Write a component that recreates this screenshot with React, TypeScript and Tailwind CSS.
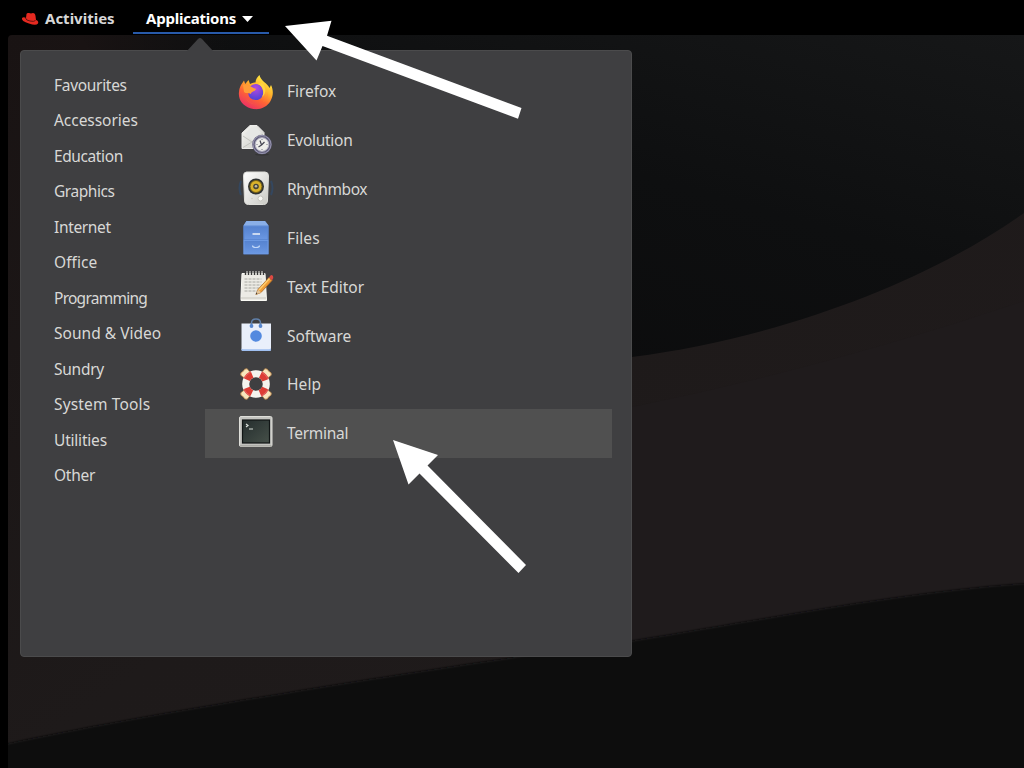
import React from "react";

type Kind = "firefox" | "evolution" | "rhythmbox" | "files" | "editor" | "software" | "help" | "terminal";

const categories = [
  { name: "Favourites", spacing: "tracking-[-0.3px]" },
  { name: "Accessories", spacing: "tracking-[-0.05px]" },
  { name: "Education", spacing: "tracking-[-0.4px]" },
  { name: "Graphics", spacing: "tracking-[-0.45px]" },
  { name: "Internet", spacing: "tracking-[-0.35px]" },
  { name: "Office", spacing: "tracking-[0.05px]" },
  { name: "Programming", spacing: "tracking-[-0.75px]" },
  { name: "Sound & Video", spacing: "tracking-[0.02px]" },
  { name: "Sundry", spacing: "tracking-[-0.25px]" },
  { name: "System Tools", spacing: "tracking-[0.15px]" },
  { name: "Utilities", spacing: "tracking-[-0.2px]" },
  { name: "Other", spacing: "tracking-[-0.25px]" },
];

const apps: { name: string; kind: Kind; spacing: string }[] = [
  { name: "Firefox", kind: "firefox", spacing: "tracking-[-0.05px]" },
  { name: "Evolution", kind: "evolution", spacing: "tracking-[-0.28px]" },
  { name: "Rhythmbox", kind: "rhythmbox", spacing: "tracking-[-0.38px]" },
  { name: "Files", kind: "files", spacing: "tracking-[0.1px]" },
  { name: "Text Editor", kind: "editor", spacing: "tracking-[-0.02px]" },
  { name: "Software", kind: "software", spacing: "tracking-[-0.05px]" },
  { name: "Help", kind: "help", spacing: "tracking-[0.1px]" },
  { name: "Terminal", kind: "terminal", spacing: "tracking-[-0.28px]" },
];

function Glyph({ kind }: { kind: Kind }) {
  switch (kind) {
    case "firefox":
      return (
        <>
          <defs>
            <linearGradient id="ff" x1="0.8" y1="0.05" x2="0.25" y2="1">
              <stop offset="0" stopColor="#fff044" />
              <stop offset="0.35" stopColor="#ffb32c" />
              <stop offset="0.62" stopColor="#ff6534" />
              <stop offset="1" stopColor="#e92c69" />
            </linearGradient>
            <radialGradient id="ffp" cx="0.5" cy="0.25" r="0.75">
              <stop offset="0" stopColor="#b44ae0" />
              <stop offset="1" stopColor="#4f42d5" />
            </radialGradient>
          </defs>
          <path d="M3 11 6 6.500 7.200 10 10.500 6 12 10C14.500 8.500 16.500 8.500 17.500 8.500 17.500 5 19.500 3 21.500 1 22.500 7 29.500 9 31.500 14 L33 11C35.500 16 35.500 22 32.500 27 28.500 34 20.500 36.500 13 34.500 4 32 0 25 1 18 1.300 14.500 2 13 3 11Z" fill="url(#ff)" />
          <path d="M7 22C9 28 14 31 20 30 27 29 30 24 30 18 29 27 23 31 16 30 11 29 8 25 7 22Z" fill="#ff803d" opacity=".6" />
          <path d="M12 13C15 9 22 9 24 14 27 20 24 26 18 26 12 26 9 21 11 17Z" fill="url(#ffp)" />
          <path d="M5 11C9 9 13 13 18 15 17 18 13 17 13 20 10 18 8 20 6 18Z" fill="#ff9c38" />
          <path d="M20 10C25 12 27 18 24 23 29 19 28 13 24 9Z" fill="#ffd343" />
        </>
      );
    case "evolution":
      return (
        <>
          <defs>
            <linearGradient id="mail" x1="0" y1="0" x2="1" y2="1">
              <stop stopColor="#f7f7f3" /><stop offset="1" stopColor="#cbcbc7" />
            </linearGradient>
          </defs>
          <path d="M4 11 12 3.500H19L26 10.500V26.500H4Z" fill="url(#mail)" stroke="#ededeb" />
          <path d="M7 11.500 13 5.500H18L23 10.500 15 18.500Z" fill="#e6e7e5" />
          <path d="m5 14 9 6L5 25.500M25 12.500l-11 7.500" fill="none" stroke="#c2c3bf" />
          <ellipse cx="24" cy="32.500" rx="7" ry="1.200" fill="#222" opacity=".35" />
          <circle cx="24" cy="22.500" r="9.800" fill="#63617c" />
          <circle cx="24" cy="22.500" r="9" fill="none" stroke="#9996b1" strokeWidth="1" />
          <circle cx="24" cy="22.500" r="6.800" fill="#eeeeea" stroke="#b5b3c4" />
          <path d="M22 18.500 23.500 23 20.500 25M23.500 23l3-3" fill="none" stroke="#444452" strokeWidth="1.200" />
          <path d="M24 17v1M28.500 22.500h1M24 27v1M18.500 22.500h1" stroke="#777787" />
        </>
      );
    case "rhythmbox":
      return (
        <>
          <defs><linearGradient id="speaker" x1="0" y1="0" x2="1" y2="1"><stop stopColor="#fff" /><stop offset="1" stopColor="#c9c9c3" /></linearGradient></defs>
          <path d="M3 10Q0 17 3 24M33 10Q36 17 33 24" stroke="#34475f" strokeWidth="2" fill="none" />
          <path d="M8.500 1h18.500q3.500 0 3.500 4L29.500 29q0 4.500-4 4.500h-15q-4 0-4-4.500L5.500 5q0-4 3-4Z" fill="url(#speaker)" stroke="#deded9" />
          <circle cx="18" cy="15.500" r="8" fill="#303333" />
          <circle cx="18" cy="15.500" r="6" fill="#d9b22b" stroke="#766015" />
          <circle cx="18" cy="15.500" r="2.800" fill="#464438" />
          <circle cx="18" cy="15.300" r="1.300" fill="#bfbba5" />
          <circle cx="22.500" cy="27.500" r="2.500" fill="#f9f9f5" stroke="#c5c4be" />
          <circle cx="14" cy="27.500" r=".8" fill="#c8c7be" />
        </>
      );
    case "files":
      return (
        <>
          <defs><linearGradient id="drawer" x2="0" y2="1"><stop stopColor="#5582cf" /><stop offset="1" stopColor="#6a97e2" /></linearGradient></defs>
          <path d="M5.500 5.500 8.500 1H27L30.500 5.500V34.500H5.500Z" fill="#5c88d3" />
          <path d="M5.500 5.500 8.500 1H27L30.500 5.500Z" fill="#8aafe7" />
          <rect x="6" y="6.500" width="24" height="13" fill="url(#drawer)" stroke="#5b88d3" />
          <rect x="6" y="20.500" width="24" height="13" fill="url(#drawer)" stroke="#6c99e3" />
          <path d="M14.500 14h7.500" stroke="#dde7f5" strokeWidth="1.700" />
          <path d="M14.500 25.500q0 2 3.500 2t3.500-2" fill="none" stroke="#c2d8f8" strokeWidth="1.200" />
        </>
      );
    case "editor":
      return (
        <>
          <path d="M4 4.500H27L28.500 31.500H3L3 27Z" fill="#ecebe5" stroke="#fafaf4" />
          <path d="M3 29h25" stroke="#c9c7bf" />
          {[7.5, 10.5, 13.5, 16.5, 19.5, 22.5, 25.5].map((x) => <path key={x} d={`M${x} 6V2`} stroke="#383838" strokeWidth="1.400" />)}
          {[7.5, 10.5, 13.5, 16.5, 19.5, 22.5].map((x) => <path key={x} d={`M${x + 1.5} 5V2`} stroke="#c8c8c4" strokeWidth="1.200" />)}
          {[10, 13, 16, 19, 22].map((y) => <path key={y} d={`M6.500 ${y}h17`} stroke="#a8a8a2" strokeDasharray="3 1" />)}
          <path d="m18 25.500 2-5L31 8.500l3 3-11 12Z" fill="#ef9d38" stroke="#a96721" strokeWidth=".8" />
          <path d="m20.500 20.500 10.500-11.500 1 1-10.500 11.500" fill="#ffcf70" />
          <path d="m18 25.500 2-5 3 3Z" fill="#e2c59a" />
          <path d="m17.500 25.500 1-2 1 1Z" fill="#333" />
          <path d="m31 8.500 1.500-2q1-1 2.500.5 1 2-1 4.500Z" fill="#dc4942" />
        </>
      );
    case "software":
      return (
        <>
          <path d="M3.500 5.500h29.500v26q0 1-1 1H4.500q-1 0-1-1Z" fill="#e9effb" />
          <path d="M3.500 30v2q0 1 1 1h27.500q1 0 1-1v-2q-.5 1.300-2 1.300H5.500q-2 0-2-1.300Z" fill="#9fbff0" />
          <path d="M13.500 8V5q0-4 4.500-4t4.500 4v3" fill="none" stroke="#6080aa" strokeWidth="1.500" />
          <circle cx="13.500" cy="8" r="1.900" fill="#5686cf" /><circle cx="22.500" cy="8" r="1.900" fill="#5686cf" />
          <circle cx="18" cy="18" r="5.800" fill="#5389df" />
        </>
      );
    case "help":
      return (
        <>
          {[45, 135, 225, 315].map((a) => <path key={a} transform={`rotate(${a} 18 18)`} d="M14 6 13.500 1q1.500-2.500 4.500-1 3-1.500 4.500 1L22 6Z" fill="#f7e6bd" stroke="#b9854b" strokeWidth=".8" />)}
          <circle cx="18" cy="18" r="10.300" fill="none" stroke="#f5f3ee" strokeWidth="7" />
          <circle cx="18" cy="18" r="10.300" fill="none" stroke="#dc3d35" strokeWidth="7" strokeDasharray="7.600 8.579" strokeDashoffset="-4.290" />
          <circle cx="18" cy="18" r="13" fill="none" stroke="#fff" opacity=".2" />
        </>
      );
    case "terminal":
      return (
        <>
          <defs><linearGradient id="screen" x1="0" y1="0" x2="1" y2="1"><stop stopColor="#242d2d" /><stop offset="1" stopColor="#465049" /></linearGradient></defs>
          <rect x="1.500" y="1.500" width="32.500" height="30" rx="1.500" fill="#c4c4c0" stroke="#deded9" />
          <path d="M2 31h31.500" stroke="#95958f" />
          <rect x="4.500" y="5" width="27" height="23" fill="url(#screen)" stroke="#111515" strokeWidth="1.200" />
          <path d="m8 9 2 1.500L8 12M11 14h4" fill="none" stroke="#d9dfda" strokeWidth="1.200" />
        </>
      );
  }
}

function Wallpaper() {
  return (
    <svg className="absolute inset-0 h-full w-full" viewBox="0 0 1024 768" aria-hidden="true">
      <defs>
        <linearGradient id="brown" x2="1" y2="1"><stop stopColor="#191313" /><stop offset=".5" stopColor="#1e1a1a" /><stop offset="1" stopColor="#201b1c" /></linearGradient>
        <linearGradient id="dark" x1="1" y1="0" x2="0.15" y2="1"><stop stopColor="#161718" /><stop offset=".45" stopColor="#0e0f10" /><stop offset="1" stopColor="#0b0b0c" /></linearGradient>
        <linearGradient id="fade"><stop stopColor="#191313" /><stop offset="1" stopColor="#191313" stopOpacity="0" /></linearGradient>
        <filter id="edge"><feGaussianBlur stdDeviation="1.200" /></filter>
      </defs>
      <path d="M8 35H1024V768H8Z" fill="url(#brown)" />
      <path d="M80 35H1024V213C930 280 785 337 632 357 430 380 240 270 80 35Z" fill="url(#dark)" />
      <path d="M80 35H230V50H80Z" fill="url(#fade)" />
      <path d="M632 407Q825 368 1024 301V583L632 641Z" fill="#1f1b1c" />
      <path d="M-10 748C120 717 490 659 632 641 780 617 900 592 1034 583V788H-10Z" fill="#0d0e10" filter="url(#edge)" />
      <path d="M0 0H1024V35H12Q8 35 8 39V768H0Z" fill="#000" />
    </svg>
  );
}

export default function App() {
  return (
    <div className="relative h-[768px] w-[1024px] overflow-hidden bg-black font-['Noto_Sans',sans-serif] text-[15.5px] text-[#d8d8d6]">
      <Wallpaper />
      <header className="relative flex h-[35px] items-start text-[15px] font-bold text-[#d7d7d7]">
        <div className="ml-[21px] flex h-[35px] w-[112px] items-center gap-[6px]">
          <svg className="mt-[2px] h-[17px] w-[18px] shrink-0" viewBox="0 0 18 17" aria-hidden="true">
            <path d="M1 8C2 7 3.500 7 5 8L5.500 4Q6 2.500 8 3L10 3.500Q14 2 14.500 6L15 10Q18 11 17 13.500 15 16 8 13.500 0 11 1 8Z" fill="#e52920" />
            <path d="M4.500 8Q5 10.500 9 11 13 12 14.500 10.500" fill="none" stroke="#64130f" strokeWidth="1" />
          </svg>
          <span className="whitespace-nowrap pt-[2px]">Activities</span>
        </div>
        <div className="flex h-[34px] w-[136px] items-center gap-[6px] border-b-[2px] border-[#285aaa] pl-[13px] text-white">
          <span className="whitespace-nowrap pt-[4px] tracking-[-0.22px]">Applications</span>
          <svg className="mt-[5px] h-[6px] w-[11px] shrink-0" viewBox="0 0 11 6"><path d="M0 0H11L5.500 6Z" fill="#fff" /></svg>
        </div>
      </header>
      <main className="relative ml-[20px] mt-[15px] flex h-[607px] w-[612px] rounded-[4px] border border-[#4b4b4c] bg-[#3f3f41]">
        <svg className="absolute -top-[13px] left-[165px] h-[14px] w-[28px]" viewBox="0 0 28 14" aria-hidden="true"><path d="M0 14 12 1Q14-1 16 1L28 14Z" fill="#3f3f41" /></svg>
        <nav className="flex w-[184px] flex-col pl-[33px] pt-[16.6px]">
          {categories.map(({ name, spacing }) => <div key={name} className={`flex h-[35.5px] shrink-0 items-center whitespace-nowrap ${spacing}`}>{name}</div>)}
        </nav>
        <section className="flex w-[407px] flex-col pt-[16.1px]">
          {apps.map(({ name, kind, spacing }) => (
            <div key={name} className={`flex h-[48.84px] shrink-0 items-center gap-[13px] pl-[33px] ${kind === "terminal" ? "bg-[#505050]" : ""}`}>
              <svg className="h-[36px] w-[36px] shrink-0 overflow-visible" viewBox="0 0 36 36" aria-hidden="true"><Glyph kind={kind} /></svg>
              <span className={`whitespace-nowrap pt-[1px] ${spacing}`}>{name}</span>
            </div>
          ))}
        </section>
      </main>
      <svg className="pointer-events-none absolute inset-0 h-full w-full" viewBox="0 0 1024 768" aria-hidden="true">
        <path d="M285 26 331.500 20.700 327 35.700 521.500 108 518 118.700 322.500 46 316.500 60.500Z" fill="#fff" />
        <path d="M393 440 438 455 427.500 465.500 526 565 518.500 573 419.500 473.500 408.500 484.500Z" fill="#fff" />
      </svg>
    </div>
  );
}
